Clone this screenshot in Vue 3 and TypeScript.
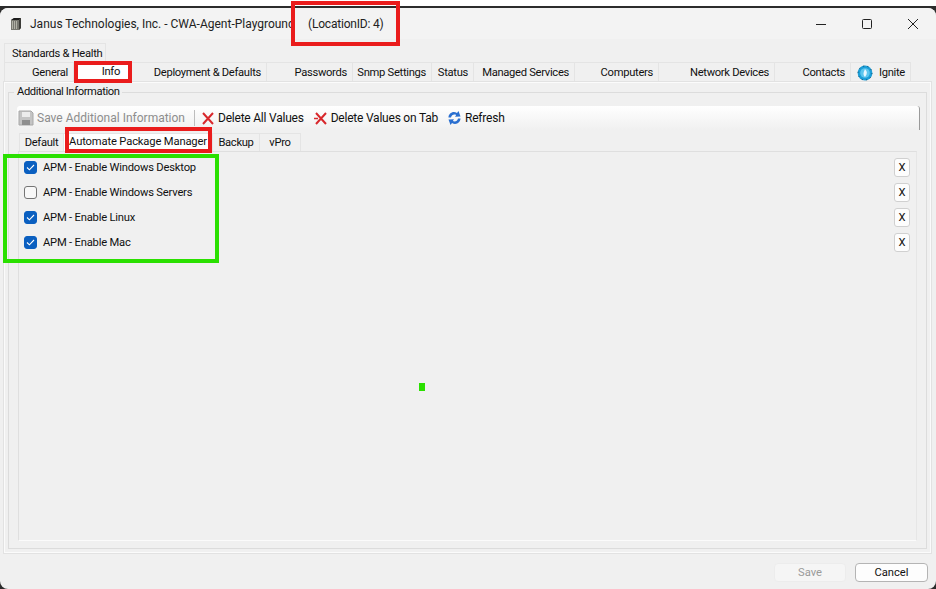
<script setup lang="ts">
const mainTabs = [
  { label: 'General' },
  { label: 'Info', active: true },
  { label: 'Deployment & Defaults' },
  { label: 'Passwords' },
  { label: 'Snmp Settings' },
  { label: 'Status' },
  { label: 'Managed Services' },
  { label: 'Computers' },
  { label: 'Network Devices' },
  { label: 'Contacts' },
]

const innerTabs = [
  { label: 'Default' },
  { label: 'Automate Package Manager', active: true },
  { label: 'Backup' },
  { label: 'vPro' },
]

const options = [
  { label: 'APM - Enable Windows Desktop', checked: true },
  { label: 'APM - Enable Windows Servers', checked: false },
  { label: 'APM - Enable Linux', checked: true },
  { label: 'APM - Enable Mac', checked: true },
]
</script>

<template>
  <div class="screen">
    <div class="window">
      <header class="titlebar">
        <svg class="app-icon" width="12" height="14" viewBox="0 0 12 14">
          <path d="M1 3 L4 1 H11 V11 L9 13 H1 Z" fill="#76766f" />
          <path d="M1 3 L4 1 H11 L9 3 Z" fill="#1c1c1c" />
          <path d="M9 3 L11 1 V11 L9 13 Z" fill="#3c3c38" />
          <path d="M2 5 H8 M2 7 H8 M2 9 H8 M2 11 H8" stroke="#ecece0" stroke-width="1" stroke-dasharray="1 1" />
        </svg>
        <span class="title">Janus Technologies, Inc. - CWA-Agent-Playground</span>
        <span class="title location">(LocationID: 4)</span>
        <div class="controls">
          <svg width="12" height="12" viewBox="0 0 12 12"><path d="M1 6.5 H11" stroke="#222" /></svg>
          <svg width="12" height="12" viewBox="0 0 12 12"><rect x="1.5" y="1.5" width="9" height="9" rx="1" fill="none" stroke="#222" /></svg>
          <svg width="12" height="12" viewBox="0 0 12 12"><path d="M1 1 L11 11 M11 1 L1 11" stroke="#222" /></svg>
        </div>
      </header>

      <div class="client">
        <div class="tab-top">Standards &amp; Health</div>
        <div class="main-tabs">
          <div v-for="tab in mainTabs" :key="tab.label" class="main-tab" :class="{ active: tab.active }">{{ tab.label }}</div>
          <div class="main-tab ignite">
            <svg width="16" height="16" viewBox="0 0 16 16">
              <circle cx="8" cy="8" r="7.4" fill="#1c9fd8" />
              <circle cx="8" cy="8" r="7" fill="none" stroke="#123f5c" stroke-width="0.8" stroke-dasharray="1.2 3.2" />
              <circle cx="8" cy="8" r="4.8" fill="#5cc6ee" />
              <path d="M8 4 C10.5 6.5 10.5 9 8 12 C6 10 6 8 8 4 Z" fill="#e6f8ff" />
            </svg>
            <span>Ignite</span>
          </div>
        </div>

        <div class="main-panel">
          <fieldset class="group">
            <legend>Additional Information</legend>
            <div class="toolbar">
              <button class="tool disabled">
                <svg width="16" height="16" viewBox="0 0 16 16">
                  <path d="M1 1 H13 L15 3 V15 H1 Z" fill="#c4c4c4" stroke="#a8a8a8" />
                  <rect x="4" y="2" width="8" height="5" fill="#ececec" />
                  <rect x="4" y="10" width="8" height="5" fill="#8e8e8e" />
                </svg>
                Save Additional Information
              </button>
              <span class="tool-sep"></span>
              <button class="tool">
                <svg width="12" height="13" viewBox="0 0 12 13"><path d="M1 1 L11 12 M11 1 L1 12" stroke="#d8282c" stroke-width="2" /></svg>
                Delete All Values
              </button>
              <button class="tool">
                <svg width="13" height="13" viewBox="0 0 13 13"><path d="M2 1 L12 12 M12 1 L2 12" stroke="#d8282c" stroke-width="2" /><path d="M0 6.5 H4" stroke="#d8282c" stroke-width="1.5" /></svg>
                Delete Values on Tab
              </button>
              <button class="tool">
                <svg width="13" height="16" viewBox="0 0 13 16">
                  <path d="M0.5 7.5 C0.5 3.5 5 0.5 9 3 L10.5 1 L12.5 6.5 L7 6.8 L8.2 5 C6 3.8 3.5 5 3 7.5 Z" fill="#2a6fd0" />
                  <path d="M12.5 8.5 C12.5 12.5 8 15.5 4 13 L2.5 15 L0.5 9.5 L6 9.2 L4.8 11 C7 12.2 9.5 11 10 8.5 Z" fill="#2a6fd0" />
                </svg>
                Refresh
              </button>
            </div>

            <div class="inner-tabs">
              <div v-for="tab in innerTabs" :key="tab.label" class="inner-tab" :class="{ active: tab.active }">{{ tab.label }}</div>
            </div>

            <div class="inner-panel">
              <div v-for="opt in options" :key="opt.label" class="option">
                <span class="check" :class="{ on: opt.checked }">
                  <svg v-if="opt.checked" width="9" height="7" viewBox="0 0 9 7"><path d="M1 3.5 L3.4 5.8 L8 1" fill="none" stroke="#fff" stroke-width="1.1" /></svg>
                </span>
                <span class="option-label">{{ opt.label }}</span>
                <button class="clear">X</button>
              </div>
            </div>
          </fieldset>
        </div>

        <footer class="actions">
          <button class="action disabled">Save</button>
          <button class="action">Cancel</button>
        </footer>
      </div>
    </div>

    <!-- annotations drawn on top of the screenshot -->
    <div class="mark red mark-location"></div>
    <div class="mark red mark-info"></div>
    <div class="mark red mark-apm"></div>
    <div class="mark green mark-options"></div>
    <div class="dot"></div>
  </div>
</template>

<style>
html,
body {
  margin: 0;
  background: #fff;
}
</style>

<style scoped>
.screen {
  position: relative;
  width: 936px;
  height: 589px;
  padding-top: 6px;
  box-sizing: border-box;
  overflow: hidden;
  font-family: Roboto, 'Noto Sans', sans-serif;
  font-size: 11.2px;
  letter-spacing: -0.3px;
  color: #111;
  background: linear-gradient(#fff 6px, #2c2c2c 6px);
}

.window {
  height: 581px;
  margin-top: 2px;
  display: flex;
  flex-direction: column;
  background: #f0f0f0;
  border-radius: 8px;
  overflow: hidden;
}

.titlebar {
  height: 31px;
  flex: none;
  display: flex;
  align-items: center;
  padding-left: 10px;
  background: #f3f3f3;
}

.app-icon {
  margin-right: 8px;
}

.title {
  font-size: 12px;
  letter-spacing: 0;
  color: #222;
  white-space: nowrap;
  width: 264px;
}

.location {
  width: auto;
  margin-left: 14px;
  letter-spacing: -0.2px;
}

.controls {
  margin-left: auto;
  display: flex;
  gap: 34px;
  padding-right: 17px;
}

.client {
  flex: 1;
  display: flex;
  flex-direction: column;
  padding: 0 3px;
}

.tab-top {
  width: 102px;
  height: 19px;
  margin: 4px 0 0 1px;
  box-sizing: border-box;
  padding: 2px 0 0 7px;
  line-height: 15px;
  white-space: nowrap;
  border: 1px solid #e4e4e4;
  border-bottom: none;
}

.main-tabs {
  height: 19px;
  display: grid;
  grid-template-columns: 70px 57px 136px 86px 79px 42px 101px 84px 116px 76px 60px;
  margin-left: 1px;
  width: 907px;
}

.main-tab {
  box-sizing: border-box;
  text-align: right;
  padding: 1px 5px 0 0;
  line-height: 17px;
  white-space: nowrap;
  border: 1px solid #e4e4e4;
  border-left: none;
  border-bottom: none;
  background: #f0f0f0;
}

.main-tab:first-child {
  border-left: 1px solid #e4e4e4;
}

.main-tab.active {
  background: #fff;
  padding-right: 10px;
  padding-top: 0;
}

.ignite {
  display: flex;
  align-items: center;
  justify-content: flex-end;
  gap: 6px;
}

.main-panel {
  height: 473px;
  box-sizing: border-box;
  padding: 3px 4px 0;
  border: 1px solid #e2e2e2;
  box-shadow: inset 0 0 0 1px #fbfbfb;
  width: 929px;
}

.group {
  height: 464px;
  box-sizing: border-box;
  margin: 0;
  padding: 6px 6px 0 8px;
  border: 1px solid #dcdcdc;
  min-width: 0;
}

.group legend {
  padding: 0 3px;
  margin-left: -3px;
  line-height: 14px;
  letter-spacing: -0.4px;
}

.toolbar {
  height: 24px;
  display: flex;
  align-items: center;
  margin-top: 1px;
  padding-left: 1px;
  background: linear-gradient(#fff, #f0f0f0);
  border-right: 1px solid #9a9a9a;
  border-radius: 3px 3px 0 0;
}

.tool {
  display: flex;
  align-items: center;
  gap: 4px;
  padding: 0;
  margin-right: 10px;
  border: none;
  background: none;
  font: inherit;
  font-size: 12px;
  letter-spacing: -0.22px;
  color: #111;
  white-space: nowrap;
}

.tool.disabled {
  color: #8d8d8d;
  margin-right: 0;
  gap: 3px;
  letter-spacing: 0;
}

.tool-sep {
  width: 1px;
  height: 16px;
  background: #bdbdbd;
  margin: 0 7px 0 9px;
}

.inner-tabs {
  display: grid;
  grid-template-columns: 45px 149px 47px 41px;
  height: 18px;
  margin-top: 3px;
  margin-left: 2px;
}

.inner-tab {
  box-sizing: border-box;
  padding-top: 1px;
  line-height: 16px;
  text-align: center;
  white-space: nowrap;
  border: 1px solid #e4e4e4;
  border-left: none;
  border-bottom: none;
}

.inner-tab:first-child {
  border-left: 1px solid #e4e4e4;
}

.inner-tab.active {
  background: #fff;
  padding-top: 0;
  letter-spacing: -0.15px;
}

.inner-panel {
  height: 390px;
  width: 899px;
  box-sizing: border-box;
  padding-top: 5px;
  border: 1px solid #dfdfdf;
  border-bottom-color: #fbfbfb;
  border-right-color: #e6e6e6;
  display: flex;
  flex-direction: column;
  gap: 5px;
  margin-left: 1px;
}

.option {
  height: 20px;
  display: flex;
  align-items: center;
  padding: 0 6px 0 5px;
}

.check {
  width: 13px;
  height: 13px;
  box-sizing: border-box;
  flex: none;
  display: flex;
  align-items: center;
  justify-content: center;
  border: 1px solid #757575;
  border-radius: 3px;
  background: #f8f8f8;
  margin-right: 6px;
}

.check.on {
  background: #0a5fc0;
  border-color: #0a5fc0;
}

.option-label {
  white-space: nowrap;
  letter-spacing: -0.2px;
}

.clear {
  margin-left: auto;
  width: 16px;
  height: 19px;
  padding: 0;
  font: inherit;
  color: #111;
  background: #fdfdfd;
  border: 1px solid #d0d0d0;
  border-radius: 3px;
}

.actions {
  display: flex;
  justify-content: flex-end;
  gap: 9px;
  padding: 9px 5px 0 0;
}

.action {
  width: 73px;
  height: 19px;
  padding: 0;
  font: inherit;
  line-height: 15px;
  color: #111;
  background: #fdfdfd;
  border: 1px solid #b4b4b4;
  border-radius: 4px;
}

.action.disabled {
  width: 72px;
  color: #9a9a9a;
  background: #f5f5f5;
  border-color: #ececec;
}

.mark {
  position: absolute;
  box-sizing: border-box;
  pointer-events: none;
}

.red {
  border: 4px solid #ea1c1c;
}

.green {
  border: 4px solid #2ae000;
}

.mark-location {
  left: 291px;
  top: 1px;
  width: 109px;
  height: 45px;
}

.mark-info {
  left: 74px;
  top: 61px;
  width: 58px;
  height: 22px;
}

.mark-apm {
  left: 65px;
  top: 127px;
  width: 147px;
  height: 26px;
}

.mark-options {
  left: 3px;
  top: 154px;
  width: 216px;
  height: 109px;
}

.dot {
  position: absolute;
  left: 419px;
  top: 383px;
  width: 6px;
  height: 8px;
  background: #2ae000;
}
</style>
